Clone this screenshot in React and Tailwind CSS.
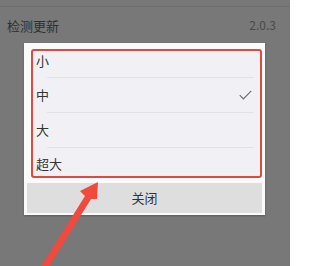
export default function App() {
  const font = { fontFamily: '"Noto Sans CJK SC", "Noto Sans", sans-serif' };
  return (
    <div className="relative w-[290px] h-[266px] overflow-hidden bg-[#787878]" style={font}>
      <div className="h-[6px]" />
      <div className="h-px bg-[#6e6e6e]" />
      <div className="h-[36px] flex items-center justify-between pl-[7px] pr-[14px]">
        <span className="text-[13px] leading-none text-[#2f2f2f]">检测更新</span>
        <span className="text-[12px] leading-none text-[#4a4a4a]">2.0.3</span>
      </div>
      <div className="ml-[24px] w-[241px] bg-[#fafafa] pt-[6px] px-[3px] pb-[2px] shadow-[0_1px_2px_rgba(0,0,0,0.25)]">
        <div className="ml-[4px] h-[129px] border-[2px] border-[#df4a40] rounded-[3px] bg-[#f1f1f5] text-[13px] text-[#333]">
          <div className="h-[26px] flex items-start pl-[3px]">
            <span className="leading-[20px]">小</span>
          </div>
          <div className="ml-[14px] mr-[6px] h-px bg-[#e2e2e6]" />
          <div className="h-[34px] flex items-center justify-between pl-[3px] pr-[8px]">
            <span className="leading-[20px]">中</span>
            <svg width="13" height="10" viewBox="0 0 13 10" fill="none">
              <path d="M0.7 5.2 L4.4 8.9 L12.3 0.8" stroke="#6b6b6b" strokeWidth="1.1" />
            </svg>
          </div>
          <div className="ml-[14px] mr-[6px] h-px bg-[#e2e2e6]" />
          <div className="h-[34px] flex items-center pl-[3px]">
            <span className="leading-[20px]">大</span>
          </div>
          <div className="ml-[14px] mr-[6px] h-px bg-[#e2e2e6]" />
          <div className="flex items-start pt-[6px] pl-[3px]">
            <span className="leading-[20px]">超大</span>
          </div>
        </div>
        <div className="mt-[5px] h-[30px] bg-[#dedede] flex items-center justify-center text-[13px] text-[#333]">
          关闭
        </div>
      </div>
      <svg className="absolute left-0 top-0" width="290" height="266" viewBox="0 0 290 266">
        <polygon
          points="98,182 80,191 85,196 40,268 48,268 91,199 97,199"
          fill="#f0493e"
        />
      </svg>
    </div>
  );
}
